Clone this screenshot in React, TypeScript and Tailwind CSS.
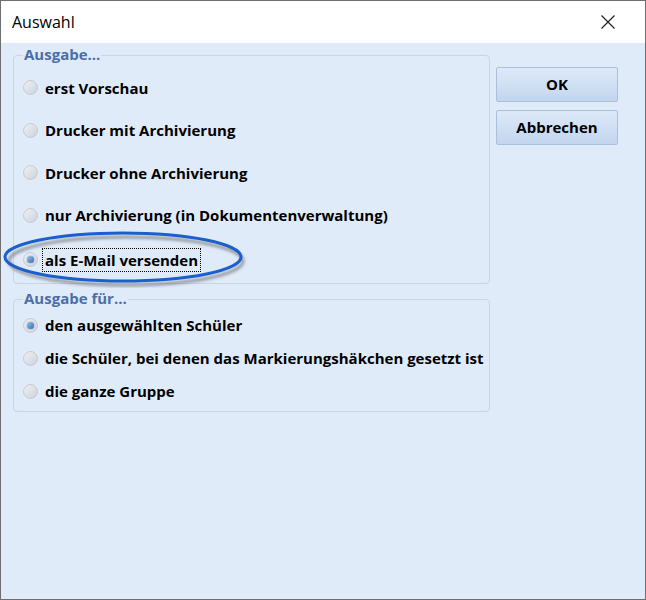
import React from 'react';

function Radio({ checked }: { checked?: boolean }) {
  return (
    <span className="relative flex h-[15px] w-[15px] shrink-0 items-center justify-center rounded-full border border-[#c0c8d3] bg-gradient-to-br from-[#eef1f5] to-[#cdd3db] shadow-[0_0_1px_#ffffff]">
      {checked && (
        <span className="h-[7px] w-[7px] rounded-full bg-gradient-to-br from-[#9cc3ea] to-[#2f6fb4] shadow-[0_0_1px_#1d4f8a]" />
      )}
    </span>
  );
}

function Option({ label, checked, focused }: { label: string; checked?: boolean; focused?: boolean }) {
  return (
    <div className="flex items-center gap-[7px] pl-[9px]">
      <Radio checked={checked} />
      <span
        className={`text-[15px] font-bold leading-[20px] text-black ${
          focused ? 'border border-dotted border-black px-[2px] py-[1px] -ml-[3px]' : ''
        }`}
      >
        {label}
      </span>
    </div>
  );
}

function GroupBox({ title, children, className }: { title: string; children: React.ReactNode; className?: string }) {
  return (
    <div className={`relative rounded-[4px] border border-[#c7d5e7] ${className ?? ''}`}>
      <span className="absolute -top-[11px] left-[9px] bg-[#e0ebfa] px-[1px] text-[15px] font-bold leading-[19px] text-[#4b6ea6]">
        {title}
      </span>
      {children}
    </div>
  );
}

export default function App() {
  const outputs = [
    'erst Vorschau',
    'Drucker mit Archivierung',
    'Drucker ohne Archivierung',
    'nur Archivierung (in Dokumentenverwaltung)',
  ];
  const targets = [
    'den ausgewählten Schüler',
    'die Schüler, bei denen das Markierungshäkchen gesetzt ist',
    'die ganze Gruppe',
  ];

  return (
    <div
      className="flex h-[600px] w-[646px] flex-col border border-[#6f6f6f] bg-[#e0ebfa]"
      style={{ fontFamily: '"Open Sans", "Noto Sans", sans-serif' }}
    >
      {/* Title bar */}
      <div className="flex h-[42px] shrink-0 items-center justify-between bg-white pl-[11px] pr-[30px]">
        <span className="text-[16px] leading-none text-black">Auswahl</span>
        <svg width="14" height="14" viewBox="0 0 14 14" className="mb-[1px]">
          <path d="M0.5 0.5 L13.5 13.5 M13.5 0.5 L0.5 13.5" stroke="#1a1a1a" strokeWidth="1.1" />
        </svg>
      </div>

      {/* Body */}
      <div className="relative flex gap-[6px] pl-[12px] pt-[12px]">
        <div className="flex w-[477px] flex-col gap-[15px]">
          <GroupBox title="Ausgabe..." className="h-[229px]">
            <div className="flex flex-col gap-[22.5px] pt-[21.5px]">
              {outputs.map((o) => (
                <Option key={o} label={o} />
              ))}
              <Option label="als E-Mail versenden" checked focused />
            </div>
          </GroupBox>

          <GroupBox title="Ausgabe für..." className="h-[113px]">
            <div className="flex flex-col gap-[13px] pt-[15px]">
              {targets.map((t, i) => (
                <Option key={t} label={t} checked={i === 0} />
              ))}
            </div>
          </GroupBox>
        </div>

        <div className="flex flex-col gap-[8px] pt-[12px]">
          {['OK', 'Abbrechen'].map((b) => (
            <button
              key={b}
              className="flex h-[35px] w-[122px] items-center justify-center rounded-[2px] border border-[#a9bfdc] bg-gradient-to-b from-[#dde9f8] via-[#d0e0f4] to-[#c2d5ee] text-[15px] font-bold text-black"
            >
              {b}
            </button>
          ))}
        </div>

        {/* Hand-drawn highlight ellipse */}
        <svg className="pointer-events-none absolute left-0 top-[175px]" width="260" height="70" viewBox="0 0 260 70">
          <defs>
            <filter id="sh" x="-10%" y="-20%" width="130%" height="150%">
              <feGaussianBlur stdDeviation="1.6" />
            </filter>
          </defs>
          <ellipse cx="125" cy="43" rx="117" ry="24" fill="none" stroke="#5a5a5a" strokeOpacity="0.6" strokeWidth="3" filter="url(#sh)" />
          <ellipse cx="122" cy="39" rx="118" ry="24" fill="none" stroke="#1a5fcc" strokeWidth="3" />
        </svg>
      </div>
    </div>
  );
}
